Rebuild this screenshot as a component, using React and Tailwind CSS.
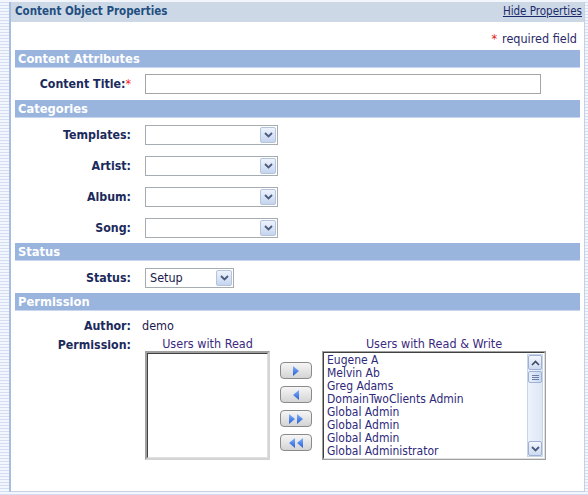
import React from 'react';

const font = { fontFamily: '"DejaVu Sans Condensed", "DejaVu Sans", Tahoma, sans-serif' };

const SectionBar = ({ title }) => (
  <div className="h-[18px] bg-[#99b4dd] border-b border-[#c9d7ee] text-white font-bold text-[12.8px] leading-[17px] pl-[3px]">
    {title}
  </div>
);

const Chevron = () => (
  <svg width="9" height="6" viewBox="0 0 9 6">
    <path d="M1 1 L4.5 4.5 L8 1" stroke="#4a5b7d" strokeWidth="1.8" fill="none" />
  </svg>
);

const Select = ({ w, value }) => (
  <div className={`${w} h-[20px] border border-[#a5acb2] bg-white flex items-stretch`}>
    <div className="flex-1 text-[12.5px] leading-[18px] pl-[4px] text-[#1a1a4a]">{value}</div>
    <div className="w-[16px] m-[1px] rounded-[2px] border border-[#b4c4dc] bg-gradient-to-b from-[#eef3fc] to-[#c5d5ef] flex items-center justify-center">
      <Chevron />
    </div>
  </div>
);

const Label = ({ children }) => (
  <div className="w-[116px] text-right font-bold text-[12.3px] text-[#1b2a5c] leading-[14px] whitespace-nowrap">{children}</div>
);

const Triangle = ({ dir }) => (
  <svg width="8" height="10" viewBox="0 0 8 10">
    <defs>
      <linearGradient id={`g${dir}`} x1="0" y1="0" x2="0" y2="1">
        <stop offset="0" stopColor="#7fb0ff" />
        <stop offset="1" stopColor="#2a5fd0" />
      </linearGradient>
    </defs>
    {dir === 'r' ? <path d="M1 0 L7 5 L1 10 Z" fill={`url(#g${dir})`} /> : <path d="M7 0 L1 5 L7 10 Z" fill={`url(#g${dir})`} />}
  </svg>
);

const MoveButton = ({ children }) => (
  <div className="w-[32px] h-[17px] rounded-[4px] border border-[#8a8a8a] bg-gradient-to-b from-[#f6f6f6] to-[#d4d4d4] flex items-center justify-center gap-0">
    {children}
  </div>
);

const users = [
  'Eugene A',
  'Melvin Ab',
  'Greg Adams',
  'DomainTwoClients Admin',
  'Global Admin',
  'Global Admin',
  'Global Admin',
  'Global Administrator',
];

export default function App() {
  return (
    <div
      className="w-[588px] h-[495px] overflow-hidden bg-[#f3f6fc] bg-[repeating-linear-gradient(to_bottom,#f3f6fc_0px,#f3f6fc_2px,#d3def2_2px,#d3def2_3px)] pt-[2px] pl-[9px] pr-[3px]"
      style={font}
    >
      <div className="h-[490px] border-l-2 border-l-[#a9bde0] border-r border-r-[#c5d0e0] border-b border-b-[#c5d0e0] bg-white flex flex-col">
        {/* header */}
        <div className="h-[20px] bg-[#cdd8e6] flex items-center justify-between pl-[4px] pr-[2px]">
          <span className="font-bold text-[11.5px] text-[#1f4f80]">Content Object Properties</span>
          <span className="text-[11.5px] text-[#1a2a6a] underline">Hide Properties</span>
        </div>

        <div className="px-[4px] flex flex-col">
          <div className="h-[28px] flex items-end justify-end pr-[3px] pb-[1px] text-[12.5px] text-[#2a2a6a]">
            <span className="text-[#e02020] mr-[5px]">*</span>required field
          </div>

          <SectionBar title="Content Attributes" />
          <div className="flex items-center mt-[6px] h-[20px]">
            <Label>
              Content Title:<span className="text-[#ff2020] font-normal">*</span>
            </Label>
            <div className="ml-[14px] w-[396px] h-[20px] border border-[#a5a5a5] bg-white" />
          </div>

          <div className="mt-[6px]">
            <SectionBar title="Categories" />
          </div>
          <div className="flex flex-col gap-[11px] mt-[7px]">
            {['Templates:', 'Artist:', 'Album:', 'Song:'].map((l) => (
              <div key={l} className="flex items-center h-[20px]">
                <Label>{l}</Label>
                <div className="ml-[14px]">
                  <Select w="w-[133px]" />
                </div>
              </div>
            ))}
          </div>

          <div className="mt-[5px]">
            <SectionBar title="Status" />
          </div>
          <div className="flex items-center h-[20px] mt-[7px]">
            <Label>Status:</Label>
            <div className="ml-[14px]">
              <Select w="w-[89px]" value="Setup" />
            </div>
          </div>

          <div className="mt-[5px]">
            <SectionBar title="Permission" />
          </div>
          <div className="flex items-center h-[14px] mt-[8px]">
            <Label>Author:</Label>
            <span className="ml-[11px] text-[12.5px] text-[#1a1a4a]">demo</span>
          </div>

          <div className="flex mt-[5px]">
            <Label>Permission:</Label>
            <div className="ml-[14px] flex items-start">
              <div className="flex flex-col w-[125px]">
                <div className="text-center text-[12.5px] leading-[12px] text-[#3b2a80]">Users with Read</div>
                <div className="mt-[1px] h-[109px] border-2 border-t-[#a0a0a0] border-l-[#a0a0a0] border-r-[#d4d4d4] border-b-[#d4d4d4] bg-white">
                  <div className="h-full border border-t-[#404040] border-l-[#404040] border-r-[#e0e0e0] border-b-[#e0e0e0]" />
                </div>
              </div>

              <div className="flex flex-col gap-[7px] ml-[10px] mt-[24px]">
                <MoveButton>
                  <Triangle dir="r" />
                </MoveButton>
                <MoveButton>
                  <Triangle dir="l" />
                </MoveButton>
                <MoveButton>
                  <Triangle dir="r" />
                  <Triangle dir="r" />
                </MoveButton>
                <MoveButton>
                  <Triangle dir="l" />
                  <Triangle dir="l" />
                </MoveButton>
              </div>

              <div className="flex flex-col w-[224px] ml-[10px]">
                <div className="text-center text-[12.5px] leading-[12px] text-[#3b2a80]">Users with Read &amp; Write</div>
                <div className="mt-[1px] h-[109px] border border-[#a0a0a0] bg-white">
                  <div className="h-full border border-t-[#404040] border-l-[#404040] border-r-[#e0e0e0] border-b-[#e0e0e0] flex">
                    <div className="flex-1 pl-[3px] pt-[1px] overflow-hidden">
                      {users.map((u, i) => (
                        <div key={i} className="text-[12px] leading-[13px] h-[13px] text-[#2e2a7a] whitespace-nowrap">
                          {u}
                        </div>
                      ))}
                    </div>
                    <div className="w-[16px] my-[1px] mr-[1px] bg-gradient-to-r from-[#eef3fb] to-[#dde7f6] border border-[#c8d4e8] flex flex-col justify-between">
                      <div>
                        <div className="h-[15px] rounded-[2px] border border-[#9fb2d3] bg-gradient-to-b from-[#f4f7fd] to-[#cddaf0] flex items-center justify-center">
                          <svg width="9" height="6" viewBox="0 0 9 6">
                            <path d="M1 5 L4.5 1.5 L8 5" stroke="#3c4a66" strokeWidth="1.6" fill="none" />
                          </svg>
                        </div>
                        <div className="h-[12px] mt-[1px] rounded-[2px] border border-[#9fb2d3] bg-gradient-to-r from-[#e6eefb] to-[#c9d8f1] flex flex-col items-center justify-center gap-[1px]">
                          <div className="w-[7px] h-px bg-[#6d80a5]" />
                          <div className="w-[7px] h-px bg-[#6d80a5]" />
                          <div className="w-[7px] h-px bg-[#6d80a5]" />
                        </div>
                      </div>
                      <div className="h-[15px] rounded-[2px] border border-[#9fb2d3] bg-gradient-to-b from-[#f4f7fd] to-[#cddaf0] flex items-center justify-center">
                        <Chevron />
                      </div>
                    </div>
                  </div>
                </div>
              </div>
            </div>
          </div>
        </div>
      </div>
    </div>
  );
}
